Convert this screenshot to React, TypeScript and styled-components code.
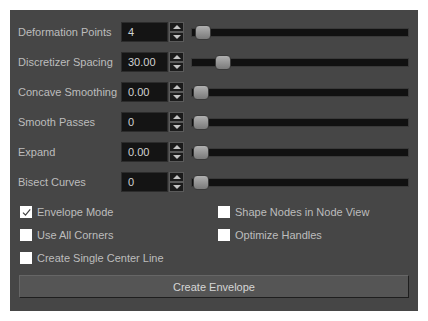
import styled, { createGlobalStyle } from "styled-components";

const GlobalStyle = createGlobalStyle`
  html, body {
    margin: 0;
    padding: 0;
    background: #ffffff;
  }
  body {
    font-family: "Liberation Sans", Arial, sans-serif;
  }
`;

type Row = { label: string; value: string; thumb: number };

const rows: Row[] = [
  { label: "Deformation Points", value: "4", thumb: 3 },
  { label: "Discretizer Spacing", value: "30.00", thumb: 23 },
  { label: "Concave Smoothing", value: "0.00", thumb: 1 },
  { label: "Smooth Passes", value: "0", thumb: 1 },
  { label: "Expand", value: "0.00", thumb: 1 },
  { label: "Bisect Curves", value: "0", thumb: 1 },
];

const checks = [
  { label: "Envelope Mode", checked: true },
  { label: "Shape Nodes in Node View", checked: false },
  { label: "Use All Corners", checked: false },
  { label: "Optimize Handles", checked: false },
  { label: "Create Single Center Line", checked: false },
];

const App = () => {
  return (
    <Page>
      <GlobalStyle />
      <Panel>
        <Fields>
          {rows.map((r) => (
            <FieldRow key={r.label}>
              <Label>{r.label}</Label>
              <SpinBox>
                <Input>{r.value}</Input>
                <Spinner>
                  <SpinButton>
                    <Arrow $up />
                  </SpinButton>
                  <SpinButton>
                    <Arrow />
                  </SpinButton>
                </Spinner>
              </SpinBox>
              <Track>
                <Thumb style={{ left: r.thumb }} />
              </Track>
            </FieldRow>
          ))}
        </Fields>
        <Checks>
          {checks.map((c) => (
            <CheckItem key={c.label}>
              <Box>
                {c.checked && (
                  <svg width="11" height="11" viewBox="0 0 11 11">
                    <path d="M2 5.6 L4.5 8.2 L9.2 2.4" fill="none" stroke="#444" strokeWidth="1.2" />
                  </svg>
                )}
              </Box>
              {c.label}
            </CheckItem>
          ))}
        </Checks>
        <Button>Create Envelope</Button>
      </Panel>
    </Page>
  );
};

const Page = styled.div`
  padding: 10px;
  width: 408px;
`;

const Panel = styled.div`
  background: #464646;
  width: 408px;
  height: 301px;
  box-sizing: border-box;
  padding: 12px 9px 0 8px;
  display: flex;
  flex-direction: column;
`;

const Fields = styled.div`
  display: flex;
  flex-direction: column;
  gap: 10px;
`;

const FieldRow = styled.div`
  display: flex;
  align-items: center;
  height: 20px;
`;

const Label = styled.div`
  width: 103px;
  font-size: 11px;
  color: #bdbdbd;
  white-space: nowrap;
`;

const SpinBox = styled.div`
  display: flex;
  height: 20px;
`;

const Input = styled.div`
  width: 47px;
  height: 20px;
  box-sizing: border-box;
  background: #141414;
  border: 1px solid #2c2c2c;
  color: #d2d2d2;
  font-size: 11px;
  line-height: 19px;
  padding-left: 6px;
`;

const Spinner = styled.div`
  display: flex;
  flex-direction: column;
  width: 15px;
  margin-left: 1px;
`;

const SpinButton = styled.div`
  height: 10px;
  box-sizing: border-box;
  background: #1b1b1b;
  border: 1px solid #5a5a5a;
  display: flex;
  align-items: center;
  justify-content: center;
`;

const Arrow = styled.div<{ $up?: boolean }>`
  width: 0;
  height: 0;
  border-left: 4px solid transparent;
  border-right: 4px solid transparent;
  ${(p) => (p.$up ? "border-bottom: 4px solid #c4c4c4;" : "border-top: 4px solid #c4c4c4;")}
`;

const Track = styled.div`
  position: relative;
  flex: 1;
  height: 9px;
  margin-left: 7px;
  background: #111111;
  border: 1px solid #3a3a3a;
  box-sizing: border-box;
`;

const Thumb = styled.div`
  position: absolute;
  top: -4px;
  width: 16px;
  height: 15px;
  border-radius: 4px;
  background: linear-gradient(#b0b0b0, #7a7a7a);
  border: 1px solid #3a3a3a;
  box-sizing: border-box;
`;

const Checks = styled.div`
  display: grid;
  grid-template-columns: 198px 1fr;
  row-gap: 11px;
  margin-top: 14px;
  padding-left: 2px;
`;

const CheckItem = styled.div`
  display: flex;
  align-items: center;
  gap: 5px;
  height: 12px;
  font-size: 11px;
  color: #bdbdbd;
  white-space: nowrap;
`;

const Box = styled.div`
  width: 12px;
  height: 12px;
  background: #ffffff;
  display: flex;
  align-items: center;
  justify-content: center;
`;

const Button = styled.div`
  margin-top: 11px;
  margin-left: 1px;
  height: 23px;
  box-sizing: border-box;
  background: #555555;
  border: 1px solid #666666;
  border-right-color: #1e1e1e;
  border-bottom-color: #1e1e1e;
  color: #d6d6d6;
  font-size: 11px;
  display: flex;
  align-items: center;
  justify-content: center;
`;

export default App;
